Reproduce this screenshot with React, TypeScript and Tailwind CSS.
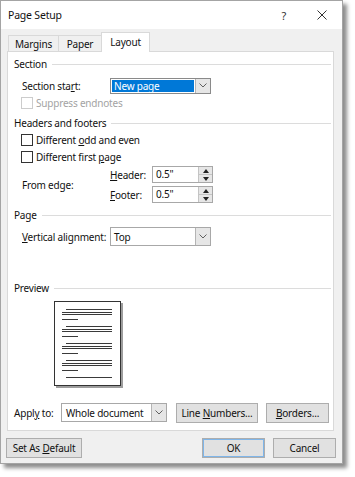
import React from 'react';

const Heading: React.FC<{ label: string; className?: string }> = ({ label, className = '' }) => (
  <div className={`flex items-center h-4 pl-[6px] pr-[2px] ${className}`}>
    <span>{label}</span>
    <div className="flex-1 h-px bg-[#dcdcdc] ml-[5px]" />
  </div>
);

const Chevron = () => (
  <svg width="8" height="5" viewBox="0 0 8 5" fill="none" stroke="#606060" strokeWidth="1">
    <path d="M0.5 0.5 L4 4 L7.5 0.5" />
  </svg>
);

const DropButton = () => (
  <div className="w-[15px] self-stretch flex items-center justify-center bg-[#e6e6e6] border-l border-[#b4b4b4]">
    <Chevron />
  </div>
);

const Checkbox: React.FC<{ disabled?: boolean; children: React.ReactNode; className?: string }> = ({ disabled, children, className = '' }) => (
  <div className={`flex items-center h-4 pl-[13px] ${className}`}>
    <div className={`w-[12px] h-[12px] bg-white border ${disabled ? 'border-[#cccccc]' : 'border-[#333333]'}`} />
    <span className={`ml-[3px] ${disabled ? 'text-[#a3a3a3]' : ''}`}>{children}</span>
  </div>
);

const Spin: React.FC<{ value: string }> = ({ value }) => (
  <div className="w-[61px] h-[17px] flex bg-white border border-[#a8a8a8]">
    <span className="flex-1 pl-[3px] leading-[15px]">{value}</span>
    <div className="w-[14px] flex flex-col bg-[#e6e6e6] border-l border-[#c4c4c4]">
      <div className="flex-1 flex items-center justify-center border-b border-[#c4c4c4]">
        <svg width="6" height="4" viewBox="0 0 6 4"><path d="M0 4 L3 0 L6 4 Z" fill="#222" /></svg>
      </div>
      <div className="flex-1 flex items-center justify-center">
        <svg width="6" height="4" viewBox="0 0 6 4"><path d="M0 0 L3 4 L6 0 Z" fill="#222" /></svg>
      </div>
    </div>
  </div>
);

const Button: React.FC<{ children: React.ReactNode; className?: string }> = ({ children, className = '' }) => (
  <div className={`h-[20px] flex items-center justify-center bg-[#e1e1e1] border border-[#adadad] ${className}`}>
    <span>{children}</span>
  </div>
);

const PreviewPage = () => {
  const groups = [0, 1, 2, 3];
  return (
    <svg width="70" height="88" viewBox="0 0 70 88" className="ml-[46px]">
      <rect x="2" y="2" width="67" height="85" fill="#9d9d9d" />
      <rect x="0.5" y="0.5" width="66" height="84" fill="#fff" stroke="#333" />
      {groups.map(g => {
        const y = 8.5 + g * 17;
        return (
          <g key={g} stroke="#3a3a3a" strokeWidth="1">
            <line x1="12" y1={y} x2="58" y2={y} />
            <line x1="8" y1={y + 3} x2="58" y2={y + 3} />
            <line x1="8" y1={y + 5} x2="58" y2={y + 5} />
            <line x1="8" y1={y + 10} x2="24" y2={y + 10} />
          </g>
        );
      })}
      <line x1="12" y1="76.5" x2="58" y2="76.5" stroke="#3a3a3a" strokeWidth="1" />
    </svg>
  );
};

export default function App() {
  return (
    <div className="w-[355px] h-[477px] bg-white font-['Noto_Sans',sans-serif] text-[10px] tracking-[-0.2px] text-[#111] leading-none">
      <div className="w-[343px] h-[464px] flex flex-col border border-[#a4a4a4] bg-[#f0f0f0] shadow-[4px_4px_4px_rgba(0,0,0,0.45)]">
        {/* title bar */}
        <div className="h-[28px] flex items-center bg-white pl-[7px]">
          <span className="text-[10.5px]">Page Setup</span>
          <span className="ml-auto mr-[31px] text-[11px] text-[#333]">?</span>
          <svg width="10" height="10" viewBox="0 0 10 10" className="mr-[15px]" stroke="#333" strokeWidth="1">
            <path d="M0.5 0.5 L9.5 9.5 M9.5 0.5 L0.5 9.5" />
          </svg>
        </div>

        {/* tabs */}
        <div className="h-[22px] flex items-end pl-[7px]">
          <div className="w-[51px] h-[16px] flex items-center justify-center border border-b-0 border-[#d9d9d9] bg-[#f0f0f0]">Margins</div>
          <div className="w-[44px] h-[16px] -ml-px flex items-center justify-center border border-b-0 border-[#d9d9d9] bg-[#f0f0f0]">Paper</div>
          <div className="relative z-10 w-[49px] h-[20px] -ml-px -mb-px flex items-center justify-center pb-[1px] border border-b-0 border-[#d9d9d9] bg-white">Layout</div>
        </div>

        {/* panel */}
        <div className="ml-[6px] w-[327px] h-[380px] flex flex-col pt-[4px] bg-white border border-[#d9d9d9]">
          <Heading label="Section" />
          <div className="mt-[4px] h-[19px] flex items-center pl-[14px]">
            <span className="w-[88px]">Section sta<u>r</u>t:</span>
            <div className="w-[101px] h-[16px] flex bg-white border border-[#8a8a8a]">
              <div className="flex-1 m-[1px] bg-[#0078d7] text-white flex items-center pl-[2px]">New page</div>
              <DropButton />
            </div>
          </div>
          <Checkbox disabled>Suppress endnotes</Checkbox>

          <Heading label="Headers and footers" className="mt-[4px]" />
          <Checkbox className="mt-[1px]">Different <u>o</u>dd and even</Checkbox>
          <Checkbox className="mt-[1px]">Different first <u>p</u>age</Checkbox>
          <div className="mt-[1px] flex items-center pl-[14px]">
            <span className="w-[88px]">From edge:</span>
            <div className="flex flex-col gap-[3px]">
              <div className="flex items-center">
                <span className="w-[42px]"><u>H</u>eader:</span>
                <Spin value={'0.5"'} />
              </div>
              <div className="flex items-center">
                <span className="w-[42px]"><u>F</u>ooter:</span>
                <Spin value={'0.5"'} />
              </div>
            </div>
          </div>

          <Heading label="Page" className="mt-[4px]" />
          <div className="mt-[4px] h-[19px] flex items-center pl-[14px]">
            <span className="w-[88px]"><u>V</u>ertical alignment:</span>
            <div className="w-[101px] h-[19px] flex bg-white border border-[#a8a8a8]">
              <span className="flex-1 pl-[3px] self-center">Top</span>
              <DropButton />
            </div>
          </div>

          <Heading label="Preview" className="mt-[34px]" />
          <div className="mt-[5px]">
            <PreviewPage />
          </div>

          <div className="mt-[14px] h-[19px] flex items-center pl-[6px]">
            <span className="w-[47px]">Appl<u>y</u> to:</span>
            <div className="w-[106px] h-[19px] flex bg-white border border-[#a8a8a8]">
              <span className="flex-1 pl-[4px] self-center">Whole document</span>
              <DropButton />
            </div>
            <Button className="ml-[9px] w-[82px] h-[19px]">Line <u>N</u>umbers...</Button>
            <Button className="ml-[8px] w-[63px] h-[19px]"><u>B</u>orders...</Button>
          </div>
        </div>

        {/* footer buttons */}
        <div className="mt-[7px] flex items-center pl-[5px] pr-[6px]">
          <Button className="w-[76px]">Set As <u>D</u>efault</Button>
          <Button className="ml-auto w-[63px] border-[#0078d7] shadow-[inset_0_0_0_1px_#7fb5e8]">OK</Button>
          <Button className="ml-[8px] w-[63px]">Cancel</Button>
        </div>
      </div>
    </div>
  );
}
